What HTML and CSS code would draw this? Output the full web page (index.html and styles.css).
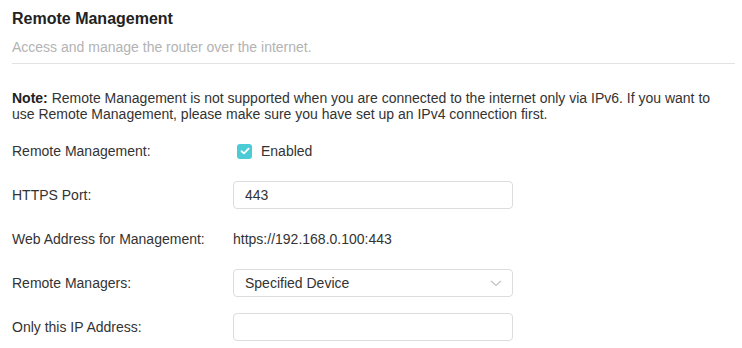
FILE: index.html
```html
<!DOCTYPE html>
<html lang="en">
<head>
    <meta charset="UTF-8">
    <meta name="viewport" content="width=device-width, initial-scale=1.0">
    <title>Remote Management</title>
    <link rel="stylesheet" href="styles.css">
</head>
<body>

    <div class="container">
        <h1 class="title">Remote Management</h1>
        <p class="desc">Access and manage the router over the internet.</p>

        <p class="note"><b>Note:</b> Remote Management is not supported when you are connected to the internet only via IPv6. If you want to use Remote Management, please make sure you have set up an IPv4 connection first.</p>

        <div class="form">
            <div class="row">
                <label class="label">Remote Management:</label>
                <label class="check">
                    <span class="check-box">
                        <svg width="10" height="8" viewBox="0 0 10 8"><path d="M1.5 4.2 L4 6.4 L8.6 1.6" fill="none" stroke="#ffffff" stroke-width="1.8" stroke-linecap="round" stroke-linejoin="round"/></svg>
                    </span>
                    Enabled
                </label>
            </div>
            <div class="row">
                <label class="label" for="httpsPort">HTTPS Port:</label>
                <input type="text" id="httpsPort" class="field" value="443">
            </div>
            <div class="row">
                <span class="label">Web Address for Management:</span>
                <span class="value">https://192.168.0.100:443</span>
            </div>
            <div class="row">
                <span class="label">Remote Managers:</span>
                <div class="field select">
                    <span>Specified Device</span>
                    <svg class="chevron" width="12" height="7" viewBox="0 0 12 7"><path d="M1 1 L6 5.5 L11 1" fill="none" stroke="#c4c4c4" stroke-width="1.3"/></svg>
                </div>
            </div>
            <div class="row">
                <label class="label" for="onlyIp">Only this IP Address:</label>
                <input type="text" id="onlyIp" class="field">
            </div>
        </div>
    </div>

</body>
</html>
```

FILE: styles.css
```css
body {
    font-family: "Liberation Sans", Arial, sans-serif;
    background-color: #ffffff;
    color: #333333;
    margin: 0;
    padding: 0;
}
.container {
    padding: 0 7px 0 12px;
}
.title {
    font-size: 16px;
    font-weight: bold;
    line-height: 20px;
    color: #222222;
    margin: 9px 0 0;
}
.desc {
    font-size: 14px;
    line-height: 20px;
    color: #b3b3b3;
    margin: 8px 0 0;
    padding-bottom: 6px;
    border-bottom: 1px solid #e3e3e3;
}
.note {
    font-size: 14px;
    line-height: 16px;
    margin: 26px 0 0;
}
.note b {
    color: #222222;
}
.form {
    display: flex;
    flex-direction: column;
    gap: 16px;
    margin-top: 15px;
}
.row {
    display: flex;
    align-items: center;
    height: 28px;
    font-size: 14px;
}
.label {
    width: 221px;
    flex-shrink: 0;
}
.check {
    display: flex;
    align-items: center;
    gap: 9px;
}
.check-box {
    width: 15px;
    height: 15px;
    border-radius: 3px;
    background-color: #4acbd6;
    display: flex;
    align-items: center;
    justify-content: center;
    margin-left: 4px;
}
.field {
    box-sizing: border-box;
    width: 280px;
    height: 28px;
    border: 1px solid #dcdcdc;
    border-radius: 4px;
    padding: 0 11px;
    font-family: inherit;
    font-size: 14px;
    color: #333333;
    outline: none;
}
.select {
    display: flex;
    align-items: center;
    justify-content: space-between;
    padding-right: 10px;
}
```
